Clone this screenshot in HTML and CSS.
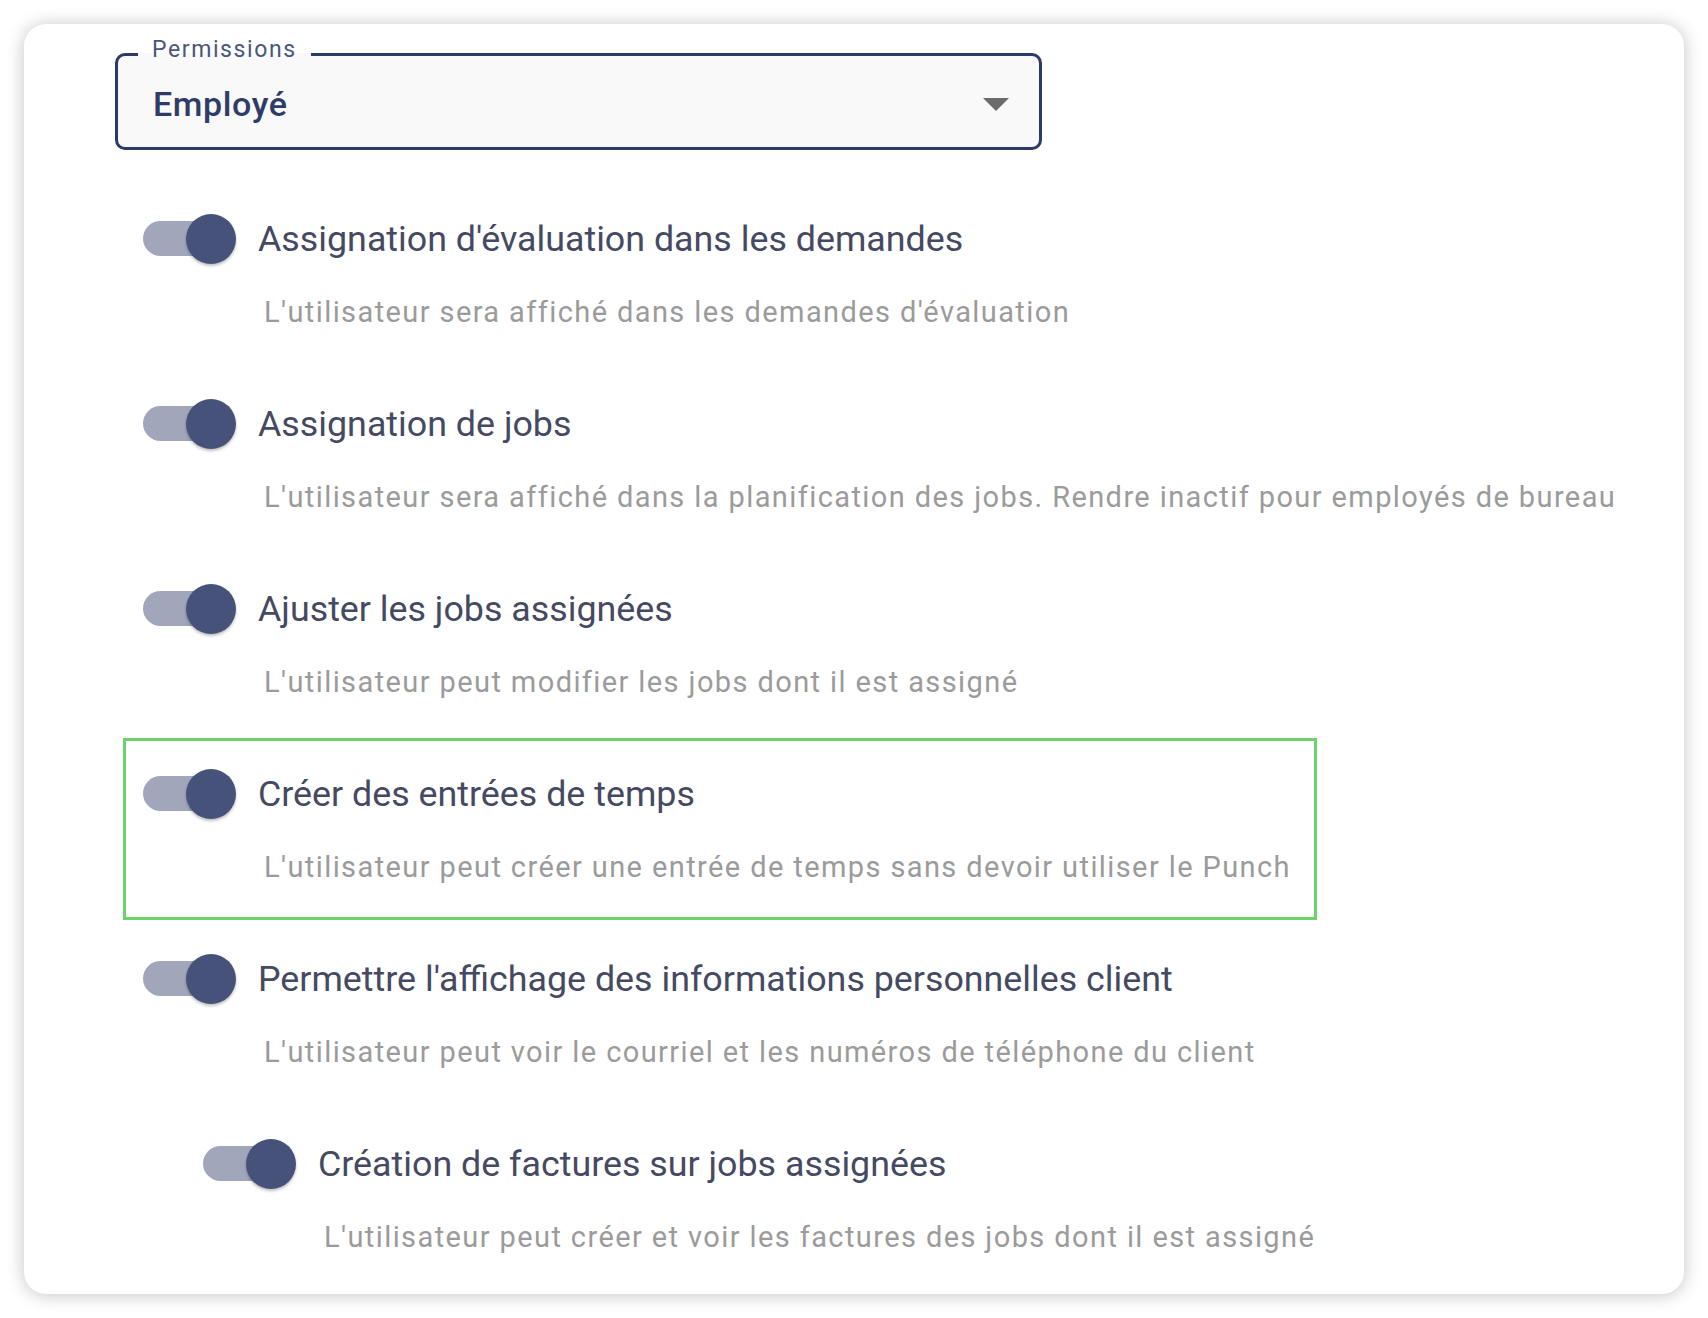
FILE: index.html
```html
<!DOCTYPE html>
<html lang="fr">
<head>
<meta charset="utf-8">
<title>Permissions</title>
<link rel="stylesheet" href="styles.css">
</head>
<body>
<div class="card">
  <fieldset class="select">
    <legend class="select-label">Permissions</legend>
    <div class="select-value">
      <span class="select-text">Employé</span>
      <svg class="select-arrow" width="26" height="13" viewBox="0 0 26 13"><path d="M0 0 L26 0 L13 13 Z" fill="#6b6b6b"/></svg>
    </div>
  </fieldset>

  <div class="perm-list">
    <div class="perm">
      <div class="perm-head">
        <span class="switch"><span class="track"></span><span class="knob"></span></span>
        <span class="perm-title">Assignation d'évaluation dans les demandes</span>
      </div>
      <div class="perm-desc">L'utilisateur sera affiché dans les demandes d'évaluation</div>
    </div>
    <div class="perm">
      <div class="perm-head">
        <span class="switch"><span class="track"></span><span class="knob"></span></span>
        <span class="perm-title">Assignation de jobs</span>
      </div>
      <div class="perm-desc">L'utilisateur sera affiché dans la planification des jobs. Rendre inactif pour employés de bureau</div>
    </div>
    <div class="perm">
      <div class="perm-head">
        <span class="switch"><span class="track"></span><span class="knob"></span></span>
        <span class="perm-title">Ajuster les jobs assignées</span>
      </div>
      <div class="perm-desc">L'utilisateur peut modifier les jobs dont il est assigné</div>
    </div>
    <div class="perm perm-highlight">
      <div class="perm-head">
        <span class="switch"><span class="track"></span><span class="knob"></span></span>
        <span class="perm-title">Créer des entrées de temps</span>
      </div>
      <div class="perm-desc">L'utilisateur peut créer une entrée de temps sans devoir utiliser le Punch</div>
    </div>
    <div class="perm">
      <div class="perm-head">
        <span class="switch"><span class="track"></span><span class="knob"></span></span>
        <span class="perm-title">Permettre l'affichage des informations personnelles client</span>
      </div>
      <div class="perm-desc">L'utilisateur peut voir le courriel et les numéros de téléphone du client</div>
    </div>
    <div class="perm perm-sub">
      <div class="perm-head">
        <span class="switch"><span class="track"></span><span class="knob"></span></span>
        <span class="perm-title">Création de factures sur jobs assignées</span>
      </div>
      <div class="perm-desc">L'utilisateur peut créer et voir les factures des jobs dont il est assigné</div>
    </div>
  </div>
</div>
</body>
</html>
```
FILE: styles.css
```css
html, body {
  margin: 0;
  padding: 0;
  background: #ffffff;
}

body {
  font-family: Roboto, "Liberation Sans", sans-serif;
}

.card {
  margin: 24px;
  width: 1660px;
  height: 1270px;
  box-sizing: border-box;
  padding: 14px 0 0 91px;
  background: #ffffff;
  border-radius: 22px;
  box-shadow: 0 1px 18px rgba(0, 0, 0, 0.24);
}

.select {
  margin: 0;
  padding: 0;
  width: 927px;
  box-sizing: border-box;
  border: 3px solid #2c3a67;
  border-radius: 10px;
  background: #f9f9f9;
  min-inline-size: 0;
}

.select-label {
  margin-left: 20px;
  padding: 0 14px 9px;
  font-size: 23px;
  line-height: 24px;
  letter-spacing: 1.6px;
  color: #4a567d;
  background: transparent;
}

.select-value {
  display: flex;
  align-items: center;
  height: 76px;
  box-sizing: border-box;
  padding: 0 30px 10px 35px;
}

.select-text {
  font-size: 34px;
  font-weight: 500;
  letter-spacing: 0.6px;
  color: #2f3c67;
}

.select-arrow {
  margin-left: auto;
  display: block;
}

.perm-list {
  margin-top: 63.5px;
  padding-left: 28px;
  display: flex;
  flex-direction: column;
  gap: 70px;
}

.perm {
  position: relative;
}

.perm-sub {
  padding-left: 60px;
}

.perm-head {
  display: flex;
  align-items: center;
  gap: 22px;
  height: 50px;
}

.switch {
  position: relative;
  display: block;
  width: 93px;
  height: 50px;
  flex: none;
}

.track {
  position: absolute;
  left: 0;
  top: 7.5px;
  width: 83px;
  height: 35px;
  border-radius: 18px;
  background: #a1a6bb;
}

.knob {
  position: absolute;
  left: 43px;
  top: 0;
  width: 50px;
  height: 50px;
  border-radius: 50%;
  background: #46527a;
  box-shadow: 0 2px 3px rgba(0, 0, 0, 0.25);
}

.perm-title {
  font-size: 35.8px;
  line-height: 50px;
  color: #454a62;
  white-space: nowrap;
}

.perm-desc {
  margin-top: 31px;
  padding-left: 121px;
  font-size: 29px;
  line-height: 34px;
  letter-spacing: 1.4px;
  color: #9b9b9b;
  white-space: nowrap;
}

.perm-highlight::after {
  content: "";
  position: absolute;
  left: -20px;
  top: -30.5px;
  width: 1194px;
  height: 182px;
  box-sizing: border-box;
  border: 3px solid #6cd26a;
  pointer-events: none;
}
```
